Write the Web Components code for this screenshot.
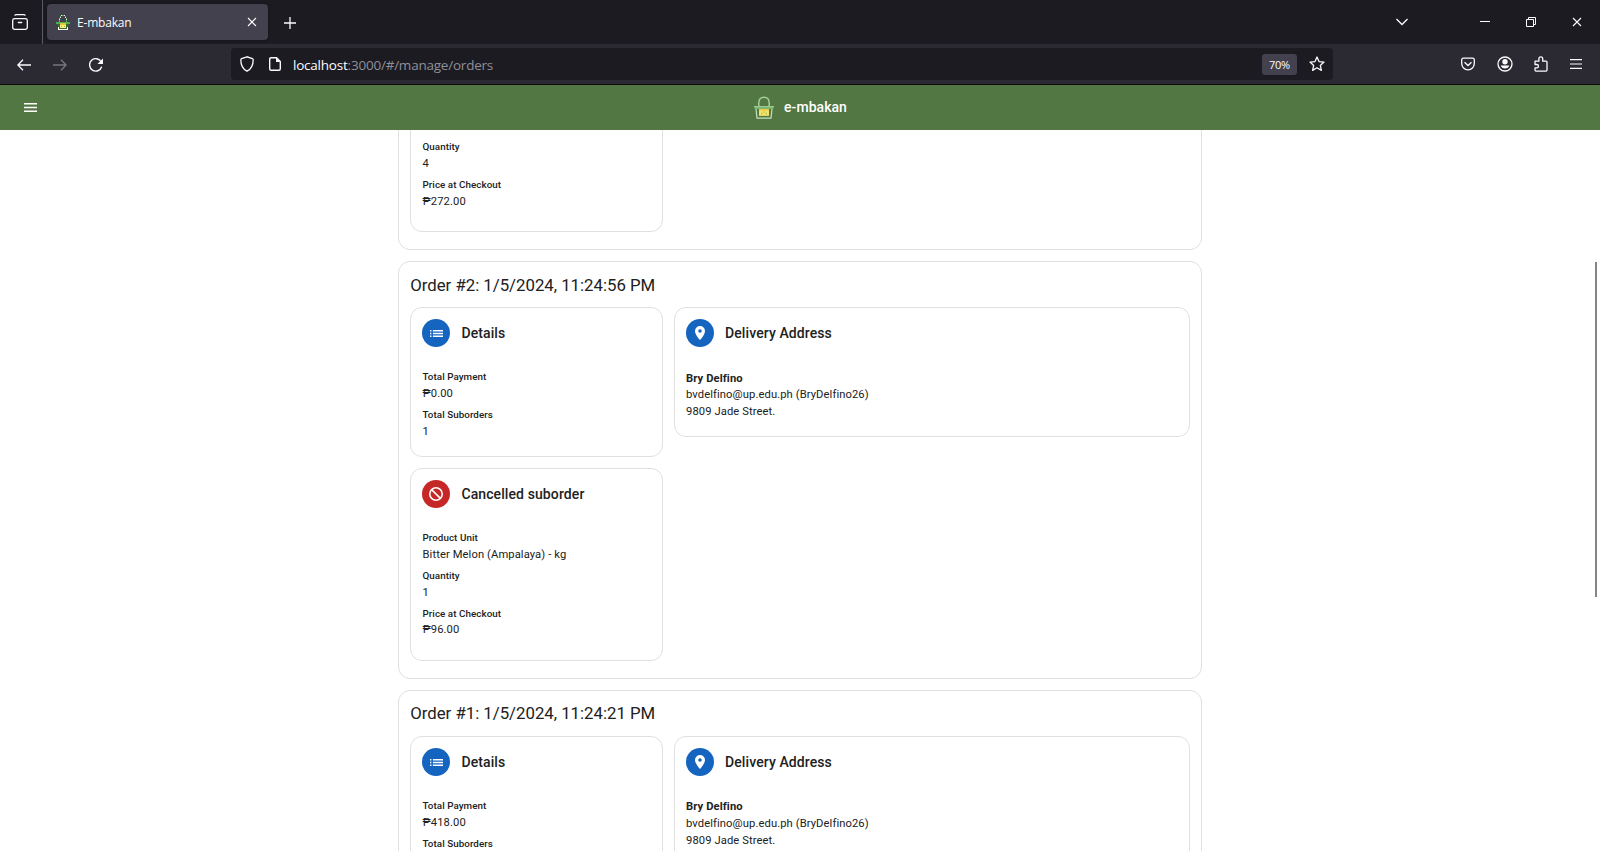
<!DOCTYPE html>
<html lang="en">
<head>
<meta charset="utf-8">
<title>E-mbakan</title>
<style>
html,body{margin:0;height:100%;overflow:hidden;background:#fff}
body{font-family:Roboto,"Liberation Sans",sans-serif;color:#212121;--head-ls:.1px;--label-ls:.06px;--value-ls:.1px}
</style>
</head>
<body>
<browser-window>
  <manage-orders></manage-orders>
</browser-window>
<script>
const ICONS = {
  view: [16,16,'<g fill="none" stroke="currentColor" stroke-width="1.3" stroke-linecap="round"><rect x=".7" y="4.7" width="14.6" height="10.6" rx="1.8"/><path d="M3 1.2Q3.3.7 4 .7h8Q12.700.7 13 1.200M6.300 8.500h3.400"/></g>'],
  close: [10,10,'<path d="M1 1l8 8M9 1l-8 8" fill="none" stroke="currentColor" stroke-width="1.1"/>'],
  plus: [12,12,'<path d="M6 0v12M0 6h12" fill="none" stroke="currentColor" stroke-width="1.3"/>'],
  chevron: [12,8,'<path d="M.5 1l5.500 5.500L11.500 1" fill="none" stroke="currentColor" stroke-width="1.300"/>'],
  min: [10,10,'<path d="M0 4.500h10" stroke="currentColor"/>'],
  restore: [10,10,'<path d="M.5 2.500h7v7h-7zM2.500 2.500v-2h7v7h-2" fill="none" stroke="currentColor"/>'],
  back: [14,12,'<path d="M14 6H1M6 .8L.9 6 6 11.200" fill="none" stroke="currentColor" stroke-width="1.300"/>'],
  forward: [14,12,'<path d="M0 6h13M8 .8L13.100 6 8 11.200" fill="none" stroke="currentColor" stroke-width="1.300"/>'],
  reload: [14,14,'<path d="M12.700 8.800A6.200 6.200 0 1 1 12.300 4" fill="none" stroke="currentColor" stroke-width="1.400"/><path d="M14 .5V6H8.500z" fill="currentColor"/>'],
  shield: [14,16,'<path d="M7 .8L1.600 2.600Q.8 2.900.8 3.700C.8 9.500 2.600 13 7 15.200 11.400 13 13.200 9.500 13.200 3.700Q13.200 2.900 12.400 2.600z" fill="none" stroke="currentColor" stroke-width="1.300"/>'],
  page: [12,14,'<path d="M7.500.7H2.200Q.7.700.7 2.200v9.600q0 1.500 1.500 1.500h7.600q1.500 0 1.500-1.500V4.500z" fill="none" stroke="currentColor" stroke-width="1.400"/><path d="M7 .5V5h4.500z" fill="currentColor"/>'],
  star: [16,16,'<path d="M8 1l2 4.600 5 .5-3.700 3.300 1.100 5L8 11.800l-4.400 2.600 1.100-5L1 6.100l5-.5z" fill="none" stroke="currentColor" stroke-width="1.300" stroke-linejoin="round"/>'],
  pocket: [14,14,'<path d="M2.300 1.200h9.400q1.600 0 1.600 1.600V6.500a6.300 6.300 0 0 1-12.600 0V2.800q0-1.600 1.600-1.600z" fill="none" stroke="currentColor" stroke-width="1.300"/><path d="M3.500 5.200L7 8.500l3.500-3.300" fill="none" stroke="currentColor" stroke-width="1.300"/>'],
  account: [16,16,'<circle cx="8" cy="8" r="7" fill="none" stroke="currentColor" stroke-width="1.300"/><circle cx="8" cy="5.800" r="2.700" fill="currentColor"/><path d="M3.700 9.500h8.600A4.500 4.200 0 0 1 3.700 9.500z" fill="currentColor"/>'],
  puzzle: [14,16,'<path d="M1 5.200h3.900V2.800a1.900 1.900 0 0 1 3.800 0V5.200h3.300q1 0 1 1v7.900q0 1-1 1H2q-1 0-1-1v-2.300h1.800a1.600 1.600 0 0 0 0-3.300H1z" fill="none" stroke="currentColor" stroke-width="1.300" stroke-linejoin="round"/>'],
  burger: [12,10,'<path d="M0 .6h12M0 5h12M0 9.400h12" stroke="currentColor" stroke-width="1.200"/>'],
  menu: [18,12,'<path d="M0 12h18v-2H0zm0-5h18V5H0zm0-7v2h18V0z" fill="currentColor"/>'],
  list: [18,10,'<path d="M0 0h2v2H0zm0 4h2v2H0zm0 4h2v2H0zM4 0h14v2H4zm0 4h14v2H4zm0 4h14v2H4z" fill="currentColor"/>'],
  pin: [14,20,'<path d="M7 9.500A2.500 2.500 0 1 1 7 4.500a2.500 2.500 0 0 1 0 5M7 0a7 7 0 0 0-7 7c0 5.250 7 13 7 13s7-7.750 7-13a7 7 0 0 0-7-7z" fill="currentColor" fill-rule="evenodd"/>'],
  cancel: [20,20,'<g fill="none" stroke="currentColor" stroke-width="2.200"><circle cx="10" cy="10" r="8.900"/><path d="M3.700 3.700l12.600 12.600"/></g>'],
  basket: [20,22,'<path d="M4.800 10V6.800Q4.800 1.200 10 1.200t5.200 5.600V10" fill="none" stroke="#a3cd98" stroke-width="1.500"/><path d="M2 12.200L3 21.200h14l1-9" fill="none" stroke="#c8e0bf" stroke-width="1.200"/><path d="M5 11.800h10V19H5z" fill="#f5e36a"/><path d="M5 12.300h10v1.700H5z" fill="#edca45"/><path d="M7 16h1.500v1.500H7zm4.500 0H13v1.500h-1.500zM9.200 14.500h1.500v1.500H9.200z" fill="#b9c94f"/><path d="M0 10.200h20l-1 2.200H1z" fill="#79b56e"/><path d="M0 10.200h20" stroke="#a6d39c"/>'],
  favicon: [14,17,'<g shape-rendering="crispEdges"><path d="M3 4h1v4H3zm7 0h1v4h-1zM4 2h1v2H4zm5 0h1v2H9zM5 1h4v1H5z" fill="#5fb052"/><path d="M3 5h1v1H3zm7 0h1v1h-1zM5 1h1v1H5zm3 0h1v1H8zM4 3h1v1H4zm5 0h1v1H9z" fill="#e9f8e6"/><path d="M0 8h14v2H0z" fill="#4caf50"/><path d="M1 10h12v1H1zM2 11h10v5H2z" fill="#2e7034"/><path d="M4 9h6v2H4z" fill="#e2c63a"/><path d="M4 11h6v3H4z" fill="#fff176"/><path d="M5 12h1v1H5zm3 0h1v1H8z" fill="#c0a52c"/><path d="M2 15h10v1H2zM2 13h1v2H2zm9 0h1v2h-1z" fill="#f4fff2"/></g>']
};
const define = (name, html) => customElements.define(name, class extends HTMLElement {
  constructor() {
    super();
    this.attachShadow({mode: 'open'});
  }
  connectedCallback() {
    if (this.shadowRoot.childNodes.length) return;
    this.shadowRoot.innerHTML = typeof html === 'function' ? html(this) : html;
  }
});

define('ui-icon', el => {
  const [w, h, body] = ICONS[el.getAttribute('name')];
  const width = el.getAttribute('w') || w, height = el.getAttribute('h') || h;
  return `<style>:host{display:inline-flex;flex:none}svg{display:block}</style>
  <svg width="${width}" height="${height}" viewBox="0 0 ${w} ${h}" preserveAspectRatio="none">${body}</svg>`;
});

define('browser-tab', `<style>
:host{display:flex;align-items:center;box-sizing:border-box;width:221px;height:36px;margin-left:4px;padding:0 11px 0 9px;border-radius:4px;background:#42414d;box-shadow:0 0 3px rgba(0,0,0,.5);color:#fbfbfe;font:12px "Open Sans","Noto Sans",sans-serif}
.t{flex:1;margin-left:7px;letter-spacing:-.2px}
</style><ui-icon name="favicon"></ui-icon><span class="t"><slot></slot></span><ui-icon name="close"></ui-icon>`);

define('tab-strip', `<style>
:host{display:flex;align-items:center;height:44px;background:#1c1b22;color:#fbfbfe}
.view{display:flex;align-items:center;width:43px;height:44px;padding-left:12px;box-sizing:border-box;border-right:1px solid #5b5a63}
.plus{margin-left:16px;margin-top:1px}.sp{flex:1}
.win{display:flex;align-items:center;gap:36px;margin-right:18px}
.chev{margin-right:72px}
</style><div class="view"><ui-icon name="view"></ui-icon></div>
<browser-tab>E-mbakan</browser-tab><ui-icon class="plus" name="plus"></ui-icon><span class="sp"></span>
<ui-icon class="chev" name="chevron"></ui-icon><div class="win"><ui-icon name="min"></ui-icon><ui-icon name="restore"></ui-icon><ui-icon name="close"></ui-icon></div>`);

define('address-bar', `<style>
:host{display:flex;align-items:center;box-sizing:border-box;width:1102px;height:32px;padding:0 8px 0 9px;border-radius:4px;background:#1c1b22;color:#fbfbfe;font:13.500px "Open Sans","Noto Sans",sans-serif}
.page{margin-left:15px}
.u{margin-left:12px;padding-top:1px;color:#8f8f98;letter-spacing:-.22px;white-space:nowrap}.u b{font-weight:400;color:#fbfbfe}
.z{display:flex;align-items:center;justify-content:center;width:35px;height:21px;margin:0 12px 0 auto;border-radius:3px;background:#42414d;font-size:11px;letter-spacing:-.3px}
</style><ui-icon name="shield"></ui-icon><ui-icon class="page" name="page"></ui-icon>
<span class="u"><b>localhost</b>:3000/#/manage/orders</span><span class="z">70%</span><ui-icon name="star"></ui-icon>`);

define('nav-bar', `<style>
:host{display:flex;align-items:center;height:40px;background:#2b2a33;color:#fbfbfe;border-bottom:1px solid #0c0c0d}
.nav{display:flex;align-items:center;gap:22px;width:214px;padding:1px 0 0 17px}
.fwd{color:#77767e}
.r{display:flex;align-items:center;margin-left:128px;gap:22px}
.pz{margin:-1px 0 0 -1px}.bg{margin-top:-1px}
</style><div class="nav"><ui-icon name="back"></ui-icon><ui-icon class="fwd" name="forward"></ui-icon><ui-icon name="reload"></ui-icon></div>
<address-bar></address-bar><div class="r"><ui-icon name="pocket"></ui-icon><ui-icon name="account"></ui-icon><ui-icon class="pz" name="puzzle"></ui-icon><ui-icon class="bg" name="burger"></ui-icon></div>`);

define('browser-window', `<style>
:host{display:flex;flex-direction:column;width:1600px;height:851px;overflow:hidden}
main{flex:1;min-height:0}
</style><tab-strip></tab-strip><nav-bar></nav-bar><main><slot></slot></main>`);

define('app-header', `<style>
:host{display:grid;grid-template-columns:1fr auto 1fr;align-items:center;height:45px;background:#527742;color:#fff}
.m{margin-left:24px;margin-top:-1px}
.b{display:flex;align-items:center;gap:10px;padding-left:1px;font-weight:500;font-size:14px;letter-spacing:.05px}
.b span{padding-bottom:2px}
</style><ui-icon class="m" name="menu" w="13" h="9"></ui-icon><div class="b"><ui-icon name="basket" w="20" h="23"></ui-icon><span><slot></slot></span></div>`);

define('data-field', el => `<style>
:host{display:block;height:38px;padding-left:.5px;white-space:nowrap}
.l{height:16px;font-weight:500;font-size:9.800px;line-height:16px;letter-spacing:var(--label-ls,0)}
.v{height:17px;font-size:11.200px;line-height:17px;letter-spacing:var(--value-ls,0)}
:host([snug]) .v{line-height:15px}
</style><div class="l">${el.getAttribute('label')}</div><div class="v"><slot></slot></div>`);

define('info-card', el => `<style>
:host{display:block;box-sizing:border-box;width:253px;border:1px solid #e0e0e0;border-radius:12px;padding:11px 11px 11px;background:#fff}
:host([wide]){width:516px;height:130px}
:host([wide]) header{gap:11px}
:host([suborder]){padding-bottom:16px}
header{display:flex;align-items:center;gap:11.400px;height:28px;margin-bottom:22px;font-weight:500;font-size:14px;letter-spacing:var(--head-ls,0)}
.c{display:flex;align-items:center;justify-content:center;width:28px;height:28px;border-radius:50%;background:#1565c0;color:#fff}
.c.red{background:#c62828}
</style>${el.hasAttribute('heading') ? `<header><span class="c ${el.getAttribute('icon') === 'cancel' ? 'red' : ''}"><ui-icon name="${el.getAttribute('icon')}" w="${{pin:10,cancel:14}[el.getAttribute('icon')]||13}" h="${{pin:14,cancel:14}[el.getAttribute('icon')]||7}"></ui-icon></span><span>${el.getAttribute('heading')}</span></header>` : ''}<slot></slot>`);

define('postal-address', `<style>
:host{display:block;font-size:11.200px;line-height:17px;letter-spacing:var(--value-ls,0);padding-top:1px}
::slotted(*){display:block}
::slotted(b){height:16px;line-height:17px}
:host([snug]) ::slotted(b){line-height:15px}
</style><slot></slot>`);

define('order-card', el => `<style>
:host{display:block;box-sizing:border-box;width:804px;border:1px solid #e0e0e0;border-radius:12px;padding:0 11px 17px;background:#fff}
h2{margin:0;height:45px;padding-left:.2px;font-weight:400;font-size:16.800px;line-height:46px;letter-spacing:-.01px}
:host([snug]) h2{line-height:44px}
.g{display:flex;flex-wrap:wrap;align-items:flex-start;gap:11px}
</style>${el.hasAttribute('heading') ? `<h2>${el.getAttribute('heading')}</h2>` : ''}<div class="g"><slot></slot></div>`);

define('manage-orders', `<style>
:host{display:flex;flex-direction:column;height:100%;position:relative;background:#fff}
.list{flex:1;min-height:0;overflow:hidden;display:flex;flex-direction:column;align-items:center;gap:11px}
.list>*{flex:none}
.first{margin-top:-20px}
.top{padding-top:27px}
.scroll{position:absolute;right:3px;top:177px;width:2px;height:335px;background:#858585}
</style><app-header>e-mbakan</app-header>
<div class="list">
<order-card class="first"><info-card suborder class="top"><data-field label="Quantity">4</data-field><data-field label="Price at Checkout">₱272.00</data-field></info-card></order-card>
<order-card heading="Order #2: 1/5/2024, 11:24:56 PM">
<info-card icon="list" heading="Details"><data-field label="Total Payment">₱0.00</data-field><data-field label="Total Suborders">1</data-field></info-card>
<info-card wide icon="pin" heading="Delivery Address"><postal-address><b>Bry Delfino</b><span>bvdelfino@up.edu.ph (BryDelfino26)</span><span>9809 Jade Street.</span></postal-address></info-card>
<info-card suborder icon="cancel" heading="Cancelled suborder"><data-field label="Product Unit">Bitter Melon (Ampalaya) - kg</data-field><data-field label="Quantity">1</data-field><data-field snug label="Price at Checkout">₱96.00</data-field></info-card>
</order-card>
<order-card snug heading="Order #1: 1/5/2024, 11:24:21 PM">
<info-card icon="list" heading="Details"><data-field label="Total Payment">₱418.00</data-field><data-field label="Total Suborders"></data-field></info-card>
<info-card wide icon="pin" heading="Delivery Address"><postal-address snug><b>Bry Delfino</b><span>bvdelfino@up.edu.ph (BryDelfino26)</span><span>9809 Jade Street.</span></postal-address></info-card>
</order-card>
</div><div class="scroll"></div>`);
</script>
</body>
</html>
